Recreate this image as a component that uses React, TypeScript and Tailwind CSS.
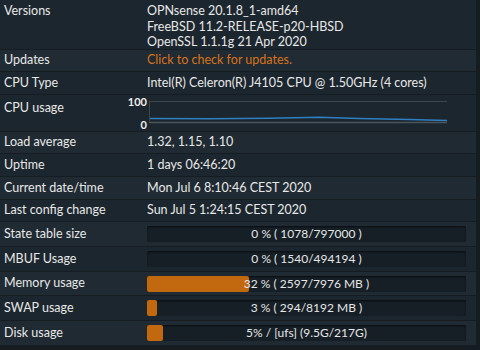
import React from "react"

type Row = { label: string; h: string; children: React.ReactNode }

const TableRow = ({ label, h, children }: Row) => (
  <div className={`flex items-center border-b border-[#151d23] pl-[4px] ${h}`}>
    <div className="w-[143px] shrink-0">{label}</div>
    <div className="flex-1 min-w-0">{children}</div>
  </div>
)

const Bar = ({ pct, text }: { pct: number; text: string }) => (
  <div className="relative h-[16px] w-[319px] rounded-[2px] bg-[#161f26] shadow-[inset_0_1px_2px_rgba(0,0,0,0.6)]">
    <div
      className="absolute left-0 top-0 h-full rounded-[2px] bg-[#c2690f]"
      style={{ width: `${pct}%` }}
    />
    <div className="absolute inset-0 flex items-center justify-center text-[12px] leading-none text-[#e6e6e6]">
      {text}
    </div>
  </div>
)

const CpuChart = () => (
  <div className="flex items-start">
    <div className="flex w-[15px] flex-col items-end text-[11px] font-bold leading-none text-[#eeeeee]">
      <span className="mt-[1px]">100</span>
      <span className="mt-[12px]">0</span>
    </div>
    <svg width="300" height="26" className="ml-[2px] mt-[5px]">
      <line x1="0" y1="1.5" x2="298" y2="1.5" stroke="#3c464d" strokeWidth="1" />
      <line x1="0.5" y1="1" x2="0.5" y2="23" stroke="#3c464d" strokeWidth="1" />
      <line x1="0" y1="22.5" x2="298" y2="22.5" stroke="#4a545b" strokeWidth="1.5" />
      <path d="M1 18.5 L60 18.8 L120 18.3 L170 17.2 L210 18.4 L260 19.5 L298 20.5" fill="none" stroke="#2f7fc1" strokeWidth="1.5" />
    </svg>
  </div>
)

export default function App() {
  return (
    <div className="flex h-[350px] w-[480px] bg-[#151d23] font-['Lato',sans-serif] text-[12.5px] text-[#e8e8e8]">
      <div className="flex w-[476px] flex-col">
        <div className="flex h-[50px] border-b border-[#151d23] bg-[#1c262e] pl-[4px] pt-[2px]">
          <div className="w-[143px] shrink-0 leading-[15.5px] pt-[1px]">Versions</div>
          <div className="flex flex-col leading-[15.5px] pt-[1px]">
            <span>OPNsense 20.1.8_1-amd64</span>
            <span>FreeBSD 11.2-RELEASE-p20-HBSD</span>
            <span>OpenSSL 1.1.1g 21 Apr 2020</span>
          </div>
        </div>
        <div className="bg-[#202b33]">
          <TableRow label="Updates" h="h-[22px]">
            <span className="text-[#d8731c]">Click to check for updates.</span>
          </TableRow>
        </div>
        <div className="bg-[#1c262e]">
          <TableRow label="CPU Type" h="h-[23px]">
            Intel(R) Celeron(R) J4105 CPU @ 1.50GHz (4 cores)
          </TableRow>
        </div>
        <div className="flex h-[37px] items-start border-b border-[#151d23] bg-[#1c262e] pl-[4px]">
          <div className="w-[128px] shrink-0 pt-[4px]">CPU usage</div>
          <CpuChart />
        </div>
        <div className="bg-[#1f2a32]">
          <TableRow label="Load average" h="h-[22px]">1.32, 1.15, 1.10</TableRow>
        </div>
        <div className="bg-[#1c262e]">
          <TableRow label="Uptime" h="h-[23px]">1 days 06:46:20</TableRow>
        </div>
        <div className="bg-[#1f2a32]">
          <TableRow label="Current date/time" h="h-[23px]">Mon Jul 6 8:10:46 CEST 2020</TableRow>
        </div>
        <div className="bg-[#1c262e]">
          <TableRow label="Last config change" h="h-[22px]">Sun Jul 5 1:24:15 CEST 2020</TableRow>
        </div>
        <div className="bg-[#1f2a32]">
          <TableRow label="State table size" h="h-[25px]">
            <Bar pct={0} text="0 % ( 1078/797000 )" />
          </TableRow>
        </div>
        <div className="bg-[#1c262e]">
          <TableRow label="MBUF Usage" h="h-[25px]">
            <Bar pct={0} text="0 % ( 1540/494194 )" />
          </TableRow>
        </div>
        <div className="bg-[#1f2a32]">
          <TableRow label="Memory usage" h="h-[24px]">
            <Bar pct={32} text="32 % ( 2597/7976 MB )" />
          </TableRow>
        </div>
        <div className="bg-[#1c262e]">
          <TableRow label="SWAP usage" h="h-[25px]">
            <Bar pct={3} text="3 % ( 294/8192 MB )" />
          </TableRow>
        </div>
        <div className="bg-[#1f2a32]">
          <TableRow label="Disk usage" h="h-[25px]">
            <Bar pct={5} text="5% / [ufs] (9.5G/217G)" />
          </TableRow>
        </div>
      </div>
    </div>
  )
}
